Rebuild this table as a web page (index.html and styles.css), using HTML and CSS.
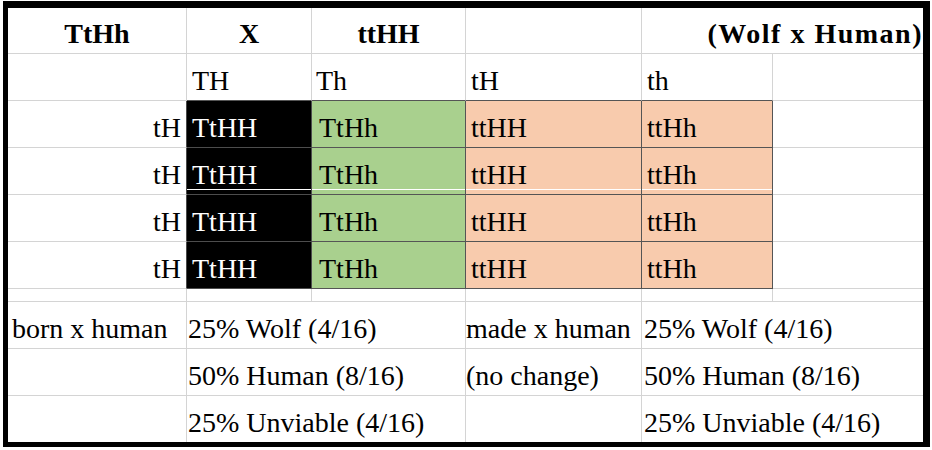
FILE: index.html
```html
<!DOCTYPE html>
<html>
<head>
<meta charset="utf-8">
<link rel="stylesheet" href="styles.css">
</head>
<body>
<div class="sheet">
  <!-- row 1 -->
  <div class="c hd">TtHh</div>
  <div class="c hd">X</div>
  <div class="c hd">ttHH</div>
  <div class="c"></div>
  <div class="c hd hd-right span2 last">(Wolf x Human)</div>
  <!-- row 2 -->
  <div class="c"></div>
  <div class="c dkb">TH</div>
  <div class="c dkb p-th">Th</div>
  <div class="c dkb">tH</div>
  <div class="c dkb">th</div>
  <div class="c last"></div>
  <!-- rows 3-6 -->
  <div class="c r dkr">tH</div>
  <div class="c sq blk">TtHH</div>
  <div class="c sq grn p-gr">TtHh</div>
  <div class="c sq pch">ttHH</div>
  <div class="c sq pch">ttHh</div>
  <div class="c last"></div>

  <div class="c r dkr">tH</div>
  <div class="c sq blk hl">TtHH</div>
  <div class="c sq grn p-gr hl">TtHh</div>
  <div class="c sq pch hl">ttHH</div>
  <div class="c sq pch hl">ttHh</div>
  <div class="c last"></div>

  <div class="c r dkr">tH</div>
  <div class="c sq blk">TtHH</div>
  <div class="c sq grn p-gr">TtHh</div>
  <div class="c sq pch">ttHH</div>
  <div class="c sq pch">ttHh</div>
  <div class="c last"></div>

  <div class="c r dkr">tH</div>
  <div class="c sq blk">TtHH</div>
  <div class="c sq grn p-gr">TtHh</div>
  <div class="c sq pch">ttHH</div>
  <div class="c sq pch">ttHh</div>
  <div class="c last"></div>
  <!-- row 7 spacer -->
  <div class="c"></div>
  <div class="c"></div>
  <div class="c"></div>
  <div class="c"></div>
  <div class="c"></div>
  <div class="c last"></div>
  <!-- rows 8-10 -->
  <div class="c p-a">born x human</div>
  <div class="c span2 p-s">25% Wolf (4/16)</div>
  <div class="c p-0">made x human</div>
  <div class="c span2 last p-e">25% Wolf (4/16)</div>

  <div class="c"></div>
  <div class="c span2 p-s">50% Human (8/16)</div>
  <div class="c p-0">(no change)</div>
  <div class="c span2 last p-e">50% Human (8/16)</div>

  <div class="c nb"></div>
  <div class="c span2 nb p-s">25% Unviable (4/16)</div>
  <div class="c nb"></div>
  <div class="c span2 last nb p-e">25% Unviable (4/16)</div>
</div>
</body>
</html>
```
FILE: styles.css
```css
html, body {
  margin: 0;
  padding: 0;
  background: #ffffff;
}

.sheet {
  display: grid;
  grid-template-columns: 179px 125px 154px 176px 131px 150px;
  grid-template-rows: 46px 47px 47px 47px 47px 47px 13px 47px 47px 46px;
  width: max-content;
  margin: 1px 0 0 3px;
  border-style: solid;
  border-color: #000000;
  border-width: 7px 7px 5px 5px;
  font-family: "Liberation Serif", "Times New Roman", serif;
  font-size: 28px;
  line-height: 32px;
  color: #000000;
}

.c {
  box-sizing: border-box;
  display: flex;
  align-items: flex-end;
  padding: 0 0 3px 5px;
  border-right: 1px solid #d4d4d4;
  border-bottom: 1px solid #d4d4d4;
  white-space: nowrap;
  min-width: 0;
}

.span2 {
  grid-column: span 2;
}

.last {
  border-right: none;
}

.nb {
  border-bottom: none;
}

.hd {
  font-weight: bold;
  justify-content: center;
  padding-left: 0;
}

.hd-right {
  justify-content: flex-end;
  padding-right: 0;
  letter-spacing: 1.5px;
}

.r {
  justify-content: flex-end;
  padding-right: 5px;
  padding-left: 0;
}

.dkr {
  border-right-color: #4a4a4a;
}

.dkb {
  border-bottom-color: #555555;
}

.sq {
  border-right: 1px solid #555555;
  border-bottom: 1px solid #555555;
}

.blk {
  background: #000000;
  color: #ffffff;
  border-right-color: #4d4d4d;
  border-bottom-color: #4d4d4d;
}

.grn {
  background: #a9d08e;
}

.pch {
  background: #f8cbad;
}

.blk.hl {
  background: linear-gradient(to top, #000000 0 4px, #ffffff 4px 5px, #000000 5px);
}

.grn.hl {
  background: linear-gradient(to top, #a9d08e 0 4px, #ffffff 4px 5px, #a9d08e 5px);
}

.pch.hl {
  background: linear-gradient(to top, #f8cbad 0 4px, #ffffff 4px 5px, #f8cbad 5px);
}

.p-th {
  padding-left: 4px;
}

.p-gr {
  padding-left: 7px;
}

.p-a {
  padding-left: 4px;
}

.p-s {
  padding-left: 1px;
}

.p-0 {
  padding-left: 0;
}

.p-e {
  padding-left: 2px;
}
```
